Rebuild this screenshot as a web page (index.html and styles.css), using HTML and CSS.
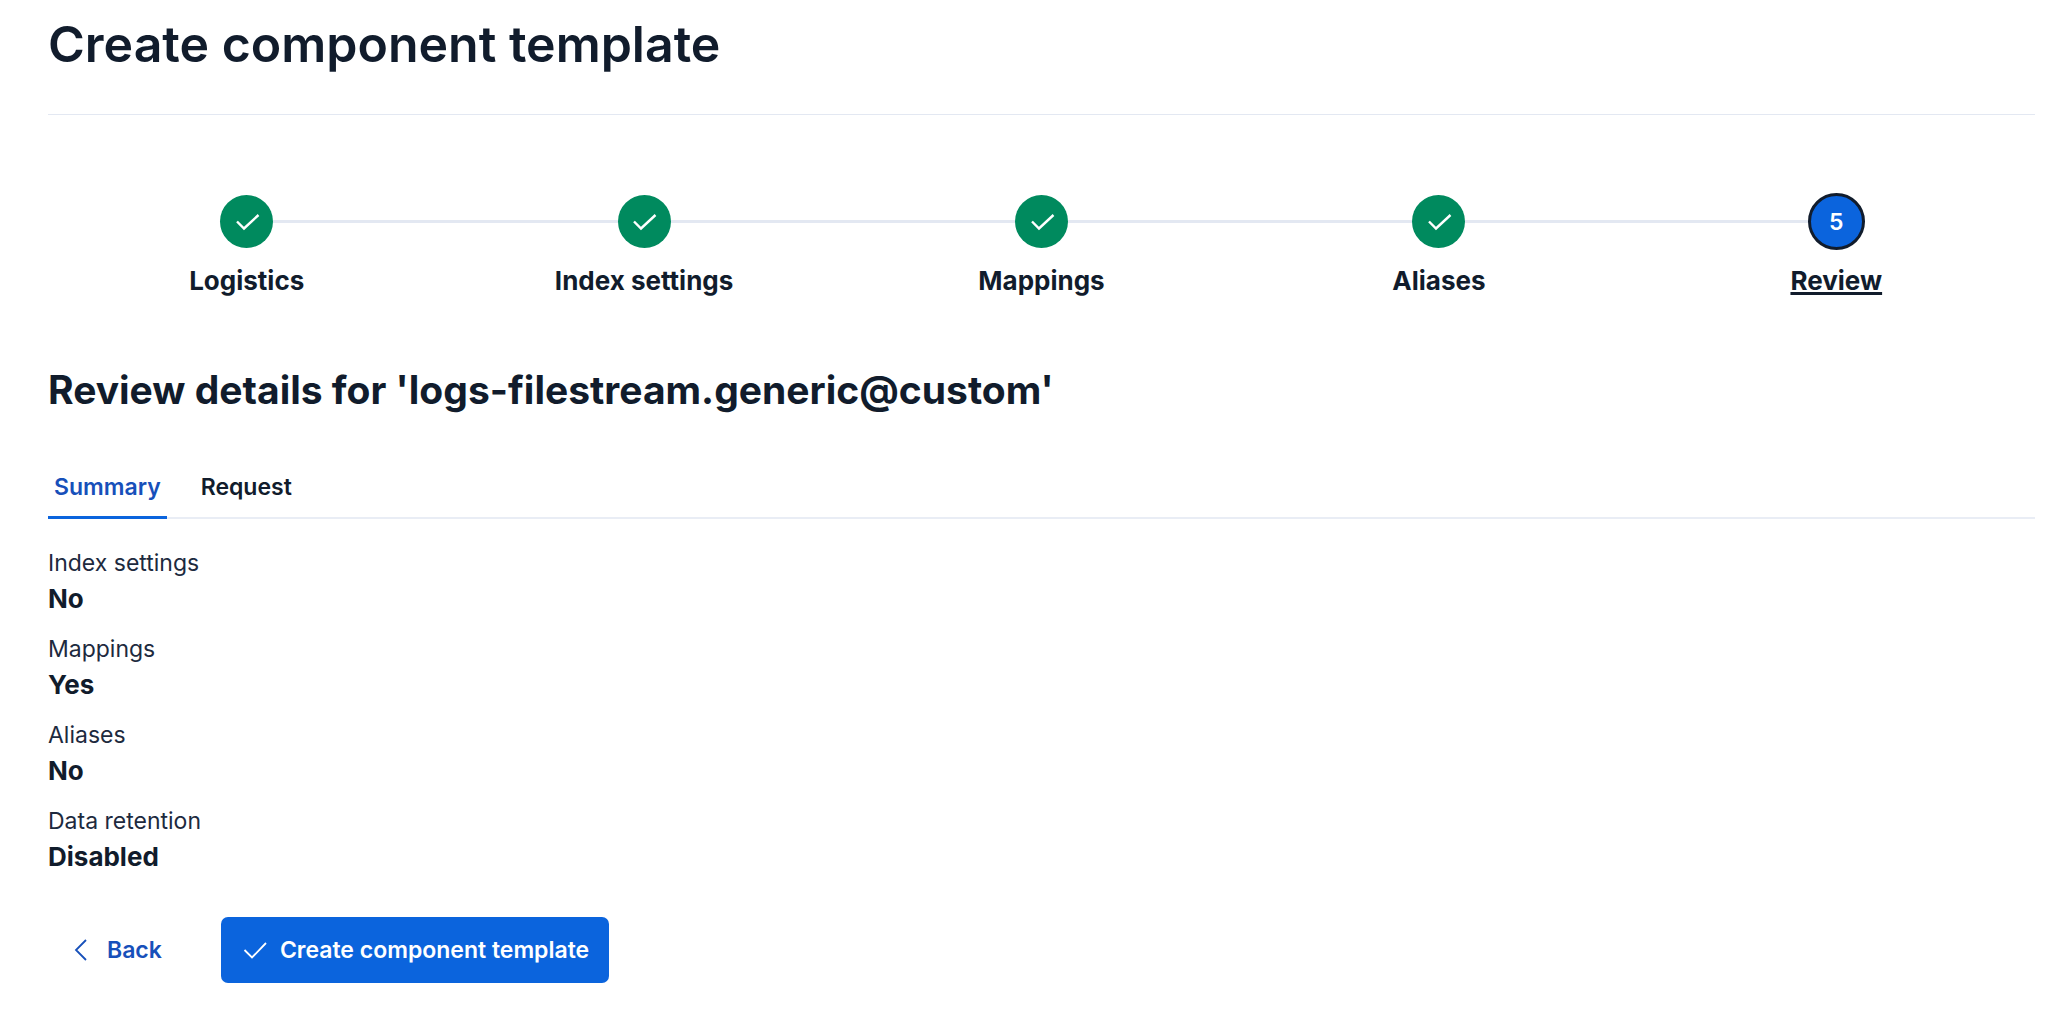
FILE: index.html
```html
<!DOCTYPE html>
<html lang="en">
  <head>
    <meta charset="UTF-8" />
    <meta name="viewport" content="width=device-width, initial-scale=1.0" />
    <title>Create component template</title>
    <link rel="stylesheet" href="styles.css">
  </head>
  <body>
    <header class="page-header">
      <h1>Create component template</h1>
    </header>

    <main>
      <!-- Wizard steps -->
      <nav aria-label="Steps">
        <ol class="steps">
          <li>
            <button class="step" type="button">
              <span class="step-track">
                <span class="step-circle">
                  <svg class="step-icon" viewBox="0 0 26 26" aria-hidden="true"><path d="M3 12.5l7 7L24.5 6" /></svg>
                </span>
              </span>
              <span class="step-title">Logistics</span>
            </button>
          </li>
          <li>
            <button class="step" type="button">
              <span class="step-track">
                <span class="step-circle">
                  <svg class="step-icon" viewBox="0 0 26 26" aria-hidden="true"><path d="M3 12.5l7 7L24.5 6" /></svg>
                </span>
              </span>
              <span class="step-title">Index settings</span>
            </button>
          </li>
          <li>
            <button class="step" type="button">
              <span class="step-track">
                <span class="step-circle">
                  <svg class="step-icon" viewBox="0 0 26 26" aria-hidden="true"><path d="M3 12.5l7 7L24.5 6" /></svg>
                </span>
              </span>
              <span class="step-title">Mappings</span>
            </button>
          </li>
          <li>
            <button class="step" type="button">
              <span class="step-track">
                <span class="step-circle">
                  <svg class="step-icon" viewBox="0 0 26 26" aria-hidden="true"><path d="M3 12.5l7 7L24.5 6" /></svg>
                </span>
              </span>
              <span class="step-title">Aliases</span>
            </button>
          </li>
          <li>
            <button class="step step-current" type="button" aria-current="step">
              <span class="step-track">
                <span class="step-circle">5</span>
              </span>
              <span class="step-title">Review</span>
            </button>
          </li>
        </ol>
      </nav>

      <h2>Review details for 'logs-filestream.generic@custom'</h2>

      <div class="tabs" role="tablist">
        <button class="tab tab-selected" id="summaryTab" type="button" role="tab" aria-selected="true" aria-controls="summary">Summary</button>
        <button class="tab" type="button" role="tab" aria-selected="false">Request</button>
      </div>

      <section id="summary" role="tabpanel" aria-labelledby="summaryTab">
        <dl class="summary-list">
          <div>
            <dt>Index settings</dt>
            <dd>No</dd>
          </div>
          <div>
            <dt>Mappings</dt>
            <dd>Yes</dd>
          </div>
          <div>
            <dt>Aliases</dt>
            <dd>No</dd>
          </div>
          <div>
            <dt>Data retention</dt>
            <dd>Disabled</dd>
          </div>
        </dl>
      </section>

      <!-- Wizard buttons -->
      <div class="actions">
        <button class="btn btn-back" type="button">
          <svg class="btn-icon" viewBox="0 0 26 26" aria-hidden="true"><path d="M18 3L8 13l10 10" /></svg>
          Back
        </button>
        <button class="btn btn-primary" type="button">
          <svg class="btn-icon" viewBox="0 0 26 26" aria-hidden="true"><path d="M3.5 13l7.5 7.5L25 6" /></svg>
          Create component template
        </button>
      </div>
    </main>
  </body>
</html>
```

FILE: styles.css
```css
* {
  margin: 0;
  padding: 0;
  box-sizing: border-box;
}

body {
  font-family: "Inter", sans-serif;
  font-size: 23px;
  background-color: #fff;
  color: #111c2c;
  padding: 14px 13px 44px 48px;
}

button {
  font-family: inherit;
  font-size: inherit;
  color: inherit;
  background: none;
  border: none;
  cursor: pointer;
}

svg {
  fill: none;
  stroke: currentColor;
}

.page-header {
  padding-bottom: 40px;
  border-bottom: 1px solid #e3e8f2;
}

h1 {
  font-size: 50px;
  line-height: 60px;
  font-weight: 600;
}

h2 {
  font-size: 39px;
  line-height: 48px;
  font-weight: 700;
  margin-top: 65px;
}

.steps {
  display: grid;
  grid-template-columns: repeat(5, 1fr);
  list-style: none;
  margin-top: 80px;
}

.step {
  display: block;
  width: 100%;
}

.step-track {
  display: flex;
  align-items: center;
}

.step-track::before,
.step-track::after {
  content: "";
  flex: 1;
  height: 3px;
  background-color: #e3e8f2;
}

.steps li:first-child .step-track::before,
.steps li:last-child .step-track::after {
  background-color: transparent;
}

.step-circle {
  display: flex;
  align-items: center;
  justify-content: center;
  width: 53px;
  height: 53px;
  border-radius: 50%;
  background-color: #008a5e;
  color: #fff;
}

.step-icon {
  width: 26px;
  height: 26px;
  stroke-width: 2.4;
}

.step-title {
  display: block;
  margin-top: 13px;
  font-size: 26px;
  line-height: 40px;
  font-weight: 700;
}

.step-current .step-circle {
  background-color: #0b64dd;
  outline: 3px solid #111c2c;
  outline-offset: -1px;
  font-weight: 600;
}

.step-current .step-title {
  text-decoration: underline;
  text-decoration-thickness: 3px;
}

.tabs {
  display: flex;
  gap: 28px;
  margin-top: 53px;
  box-shadow: inset 0 -2px #e9edf5;
}

.tab {
  padding: 0 6px 9px;
  border-bottom: 3px solid transparent;
  line-height: 40px;
  font-weight: 600;
}

.tab-selected {
  color: #1750ba;
  border-bottom-color: #0b64dd;
}

.summary-list {
  display: grid;
  gap: 14px;
  margin-top: 26px;
}

.summary-list dt {
  line-height: 36px;
  color: #1d2a3e;
}

.summary-list dd {
  font-size: 26px;
  line-height: 36px;
  font-weight: 700;
}

.actions {
  display: flex;
  gap: 39px;
  margin-top: 42px;
}

.btn {
  display: flex;
  align-items: center;
  gap: 13px;
  height: 66px;
  padding: 0 20px;
  border-radius: 7px;
  font-weight: 600;
}

.btn-icon {
  width: 26px;
  height: 26px;
  stroke-width: 1.8;
}

.btn-back {
  color: #1750ba;
}

.btn-primary {
  background-color: #0b64dd;
  color: #fff;
}
```
